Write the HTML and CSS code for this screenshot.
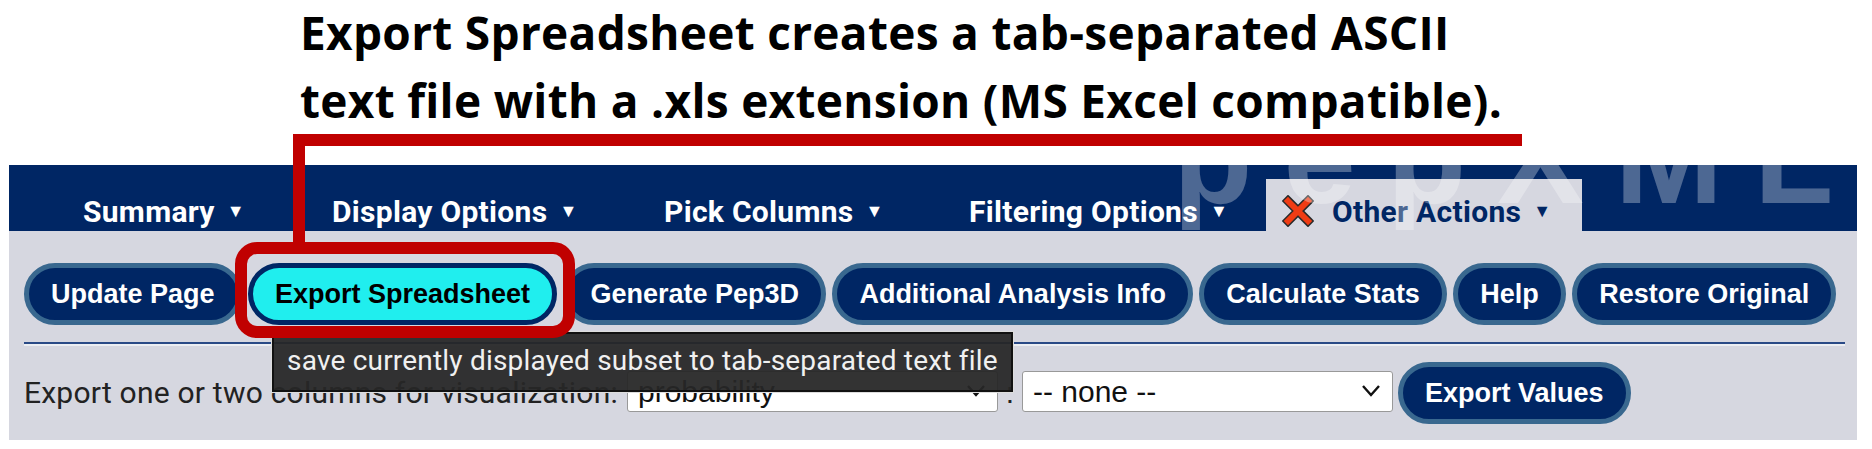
FILE: index.html
```html
<!DOCTYPE html>
<html lang="en">
<head>
    <meta charset="UTF-8" />
    <title>Export Spreadsheet</title>
    <link rel="stylesheet" href="styles.css">
</head>
<body>
    <div class="note">
        <p>Export Spreadsheet creates a tab-separated ASCII</p>
        <p>text file with a .xls extension (MS Excel compatible).</p>
    </div>

    <div class="panel">
        <nav class="tabs">
            <div class="watermark">pepXML</div>
            <a class="tab tab-summary">Summary <span class="caret">▼</span></a>
            <a class="tab tab-display">Display Options <span class="caret">▼</span></a>
            <a class="tab tab-pick">Pick Columns <span class="caret">▼</span></a>
            <a class="tab tab-filter">Filtering Options <span class="caret">▼</span></a>
            <a class="tab active">
                <svg class="x-icon" viewBox="0 0 32 32" width="32" height="32">
                    <path d="M6 6 L26 26 M26 6 L6 26" stroke="#2a2a2a" stroke-width="9" stroke-linecap="square"/>
                    <path d="M6 6 L26 26 M26 6 L6 26" stroke="#f03c14" stroke-width="6" stroke-linecap="square"/>
                </svg>
                Other Actions <span class="caret">▼</span>
            </a>
        </nav>

        <div class="actions">
            <button class="btn">Update Page</button>
            <button class="btn current">Export Spreadsheet</button>
            <button class="btn">Generate Pep3D</button>
            <button class="btn">Additional Analysis Info</button>
            <button class="btn">Calculate Stats</button>
            <button class="btn">Help</button>
            <button class="btn">Restore Original</button>
        </div>

        <hr class="rule">

        <div class="export-row">
            <span class="export-label">Export one or two columns for visualization:</span>
            <select class="col-select"><option>probability</option></select>
            <span class="sep">:</span>
            <select class="col-select"><option>-- none --</option></select>
            <button class="btn">Export Values</button>
        </div>
    </div>

    <!-- annotation drawn over the page -->
    <div class="tooltip">save currently displayed subset to tab-separated text file</div>
    <div class="red-line"></div>
    <div class="red-drop"></div>
    <div class="red-box"></div>
</body>
</html>
```

FILE: styles.css
```css
* {
    box-sizing: border-box;
    margin: 0;
    padding: 0;
}

body {
    background: #fff;
    font-family: 'Liberation Sans', Arial, sans-serif;
    height: 449px;
    overflow: hidden;
    position: relative;
}

.note {
    height: 165px;
    padding: 0 0 0 300px;
    font-family: 'Open Sans', sans-serif;
    font-weight: 700;
    font-size: 46px;
    letter-spacing: 0.3px;
    line-height: 64px;
    color: #000;
    white-space: nowrap;
}

.note p + p {
    margin-top: 4px;
}

.panel {
    margin-left: 9px;
    width: 1848px;
    height: 275px;
    background: #d6d7e0;
}

.tabs {
    position: relative;
    height: 66px;
    background: #002664;
    overflow: hidden;
    display: flex;
    align-items: flex-end;
    font-family: Roboto, sans-serif;
    font-weight: 700;
    font-size: 30px;
    letter-spacing: 0.3px;
    color: #fff;
}

.watermark {
    position: absolute;
    left: 1164px;
    top: -82px;
    font-family: 'Liberation Sans', sans-serif;
    font-weight: 700;
    font-size: 130px;
    letter-spacing: 31px;
    line-height: 150px;
    color: #fff;
    opacity: 0.3;
    z-index: 2;
    white-space: nowrap;
}

.tab {
    display: flex;
    align-items: center;
    gap: 9px;
    height: 52px;
    padding-top: 12px;
    white-space: nowrap;
}

.tab-summary { margin-left: 74px; width: 249px; }
.tab-display { width: 332px; }
.tab-pick { width: 305px; }
.tab-filter { width: 297px; }

.caret {
    font-size: 18px;
    margin-left: 3px;
}

.tab.active {
    background: #d6d7e0;
    color: #002664;
    padding-left: 16px;
    width: 316px;
}

.x-icon {
    margin-right: 9px;
}

.actions {
    display: flex;
    gap: 6.4px;
    padding: 32px 0 0 15px;
}

.btn {
    height: 62px;
    padding: 0 22px;
    border: 5px solid #39688f;
    border-radius: 31px;
    background: #002664;
    color: #fff;
    font-family: 'Liberation Sans', Arial, sans-serif;
    font-weight: 700;
    font-size: 27px;
    white-space: nowrap;
}

.btn.current {
    background: #20eeee;
    color: #000;
    border-color: #002664;
}

.rule {
    margin: 17px 12px 0 15px;
    border: none;
    border-top: 2px solid #2a4a86;
    border-bottom: 2px solid #eceef2;
}

.export-row {
    display: flex;
    align-items: center;
    padding: 16px 0 0 15px;
    font-size: 30px;
    color: #222;
}

.export-label {
    font-family: Roboto, sans-serif;
    font-size: 30px;
    letter-spacing: 0.22px;
    margin-right: 9px;
    margin-top: -2px;
    white-space: nowrap;
}

.col-select {
    appearance: none;
    width: 371px;
    height: 41px;
    margin-top: -4px;
    border: 1px solid #999;
    border-radius: 3px;
    background: #fff url("data:image/svg+xml,%3Csvg xmlns='http://www.w3.org/2000/svg' width='18' height='12'%3E%3Cpath d='M1 1 L9 10 L17 1' fill='none' stroke='%23111' stroke-width='2.4'/%3E%3C/svg%3E") no-repeat right 12px center;
    font-family: 'Liberation Sans', sans-serif;
    font-size: 30px;
    padding-left: 10px;
    color: #111;
}

.sep {
    width: 24px;
    text-align: center;
}

.export-row .btn {
    margin-left: 5px;
}

.tooltip {
    position: absolute;
    left: 272px;
    top: 332px;
    width: 741px;
    height: 60px;
    background: rgba(38, 38, 38, 0.94);
    border: 2px solid #111;
    outline: 1px solid #ddd;
    color: #f0f0f0;
    font-family: Roboto, sans-serif;
    font-size: 28px;
    letter-spacing: 0.2px;
    line-height: 54px;
    padding-left: 13px;
    white-space: nowrap;
}

.red-line {
    position: absolute;
    left: 293px;
    top: 134px;
    width: 1229px;
    height: 12px;
    background: #c00000;
}

.red-drop {
    position: absolute;
    left: 293px;
    top: 134px;
    width: 12px;
    height: 112px;
    background: #c00000;
}

.red-box {
    position: absolute;
    left: 235px;
    top: 242px;
    width: 340px;
    height: 96px;
    border: 12px solid #c00000;
    border-radius: 22px;
}
```
